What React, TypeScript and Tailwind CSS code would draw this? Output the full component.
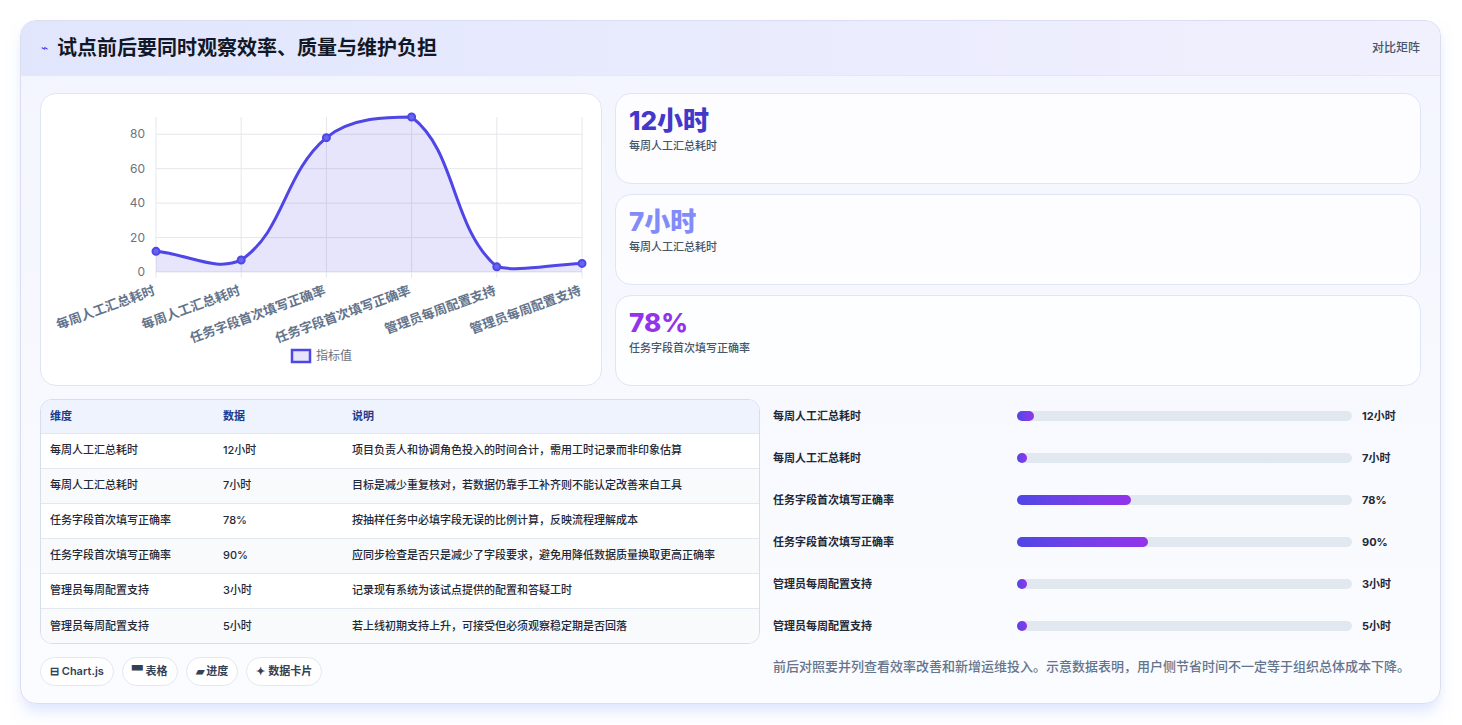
import React from 'react'

const font = { fontFamily: 'Inter, "Noto Sans CJK SC", sans-serif' }

const labels = ['每周人工汇总耗时', '每周人工汇总耗时', '任务字段首次填写正确率', '任务字段首次填写正确率', '管理员每周配置支持', '管理员每周配置支持']
const values = [12, 7, 78, 90, 3, 5]

const rows = [
  ['每周人工汇总耗时', '12小时', '项目负责人和协调角色投入的时间合计，需用工时记录而非印象估算'],
  ['每周人工汇总耗时', '7小时', '目标是减少重复核对，若数据仍靠手工补齐则不能认定改善来自工具'],
  ['任务字段首次填写正确率', '78%', '按抽样任务中必填字段无误的比例计算，反映流程理解成本'],
  ['任务字段首次填写正确率', '90%', '应同步检查是否只是减少了字段要求，避免用降低数据质量换取更高正确率'],
  ['管理员每周配置支持', '3小时', '记录现有系统为该试点提供的配置和答疑工时'],
  ['管理员每周配置支持', '5小时', '若上线初期支持上升，可接受但必须观察稳定期是否回落'],
]

const bars = [
  ['每周人工汇总耗时', 5, '12小时'],
  ['每周人工汇总耗时', 3, '7小时'],
  ['任务字段首次填写正确率', 34, '78%'],
  ['任务字段首次填写正确率', 39, '90%'],
  ['管理员每周配置支持', 3, '3小时'],
  ['管理员每周配置支持', 3, '5小时'],
] as const

function Chart() {
  const x0 = 115, x1 = 541, yz = 178, k = 155 / 90
  const top = yz - 90 * k
  const clampY = (y: number) => Math.max(top, Math.min(yz, y))
  const pts = values.map((v, i) => ({ x: x0 + (i * (x1 - x0)) / 5, y: yz - v * k }))
  // chart.js style spline, tension 0.4, control points capped to chart area
  const cps = pts.map((p, i) => {
    const prev = pts[i - 1] ?? p, next = pts[i + 1] ?? p
    const d01 = Math.hypot(p.x - prev.x, p.y - prev.y), d12 = Math.hypot(next.x - p.x, next.y - p.y)
    const s01 = d01 / (d01 + d12 || 1), s12 = d12 / (d01 + d12 || 1)
    const fa = 0.4 * s01, fb = 0.4 * s12
    return {
      px: p.x - fa * (next.x - prev.x), py: clampY(p.y - fa * (next.y - prev.y)),
      nx: p.x + fb * (next.x - prev.x), ny: clampY(p.y + fb * (next.y - prev.y)),
    }
  })
  let d = `M${pts[0].x},${pts[0].y}`
  for (let i = 1; i < pts.length; i++) {
    d += ` C${cps[i - 1].nx},${cps[i - 1].ny} ${cps[i].px},${cps[i].py} ${pts[i].x},${pts[i].y}`
  }
  const area = `${d} L${x1},${yz} L${x0},${yz} Z`
  return (
    <svg width="561" height="292" viewBox="0 0 561 292">
      {[0, 20, 40, 60, 80].map((t) => (
        <g key={t}>
          <line x1={x0} x2={x1} y1={yz - t * k} y2={yz - t * k} stroke="#e5e7eb" />
          <text x={x0 - 11} y={yz - t * k + 4} textAnchor="end" fontSize="12" fill="#6b7280" fontFamily="Inter, sans-serif">{t}</text>
        </g>
      ))}
      {pts.map((p, i) => (
        <line key={i} x1={p.x} x2={p.x} y1={23} y2={yz + 6} stroke="#e5e7eb" />
      ))}
      <path d={area} fill="rgba(79,70,229,0.14)" />
      <path d={d} fill="none" stroke="#4f46e5" strokeWidth="3" />
      {pts.map((p, i) => (
        <circle key={i} cx={p.x} cy={p.y} r="3.5" fill="#6366f1" stroke="#4f46e5" strokeWidth="2" />
      ))}
      {pts.map((p, i) => (
        <text key={i} x={p.x} y={yz + 22} textAnchor="end" fontSize="13" fontWeight="600" fill="#64748b" transform={`rotate(-20 ${p.x} ${yz + 22})`} fontFamily='"Noto Sans CJK SC", sans-serif'>{labels[i]}</text>
      ))}
      <rect x="251" y="256" width="18" height="12" fill="rgba(79,70,229,0.14)" stroke="#4f46e5" strokeWidth="2.5" />
      <text x="275" y="266" fontSize="12" fill="#6b7280" fontFamily='"Noto Sans CJK SC", sans-serif'>指标值</text>
    </svg>
  )
}

function Stat({ value, label, color }: { value: string; label: string; color: string }) {
  return (
    <div className="flex h-[91px] flex-col rounded-2xl border border-[#dfe5f5] bg-white/80 px-[13px] pt-[10px]">
      <div className={`text-[26px] font-extrabold leading-[34px] ${color}`}>{value}</div>
      <div className="text-[11px] font-medium text-[#475569]">{label}</div>
    </div>
  )
}

export default function App() {
  return (
    <div className="min-h-screen bg-white p-5 pr-[21px]" style={font}>
      <div className="overflow-hidden rounded-2xl border border-[#d9def0] bg-gradient-to-b from-[#f3f5fe] to-[#fbfcff] shadow-lg shadow-indigo-100">
        <div className="flex h-[55px] items-center justify-between border-b border-[#e3e7f6] bg-gradient-to-r from-[#e1e6fd] to-[#f1f0fd] px-5">
          <div className="flex items-center gap-[9px]">
            <span className="text-[12px] text-indigo-600">⌁</span>
            <span className="text-[20px] font-bold text-[#111827]">试点前后要同时观察效率、质量与维护负担</span>
          </div>
          <span className="text-[12px] font-medium text-[#475569]">对比矩阵</span>
        </div>
        <div className="px-[19px] pb-[17px] pt-[17px]">
          <div className="flex gap-[13px]">
            <div className="h-[293px] w-[562px] shrink-0 overflow-hidden rounded-2xl border border-[#dfe5f5] bg-white">
              <Chart />
            </div>
            <div className="flex flex-1 flex-col gap-[10px]">
              <Stat value="12小时" label="每周人工汇总耗时" color="text-[#4338ca]" />
              <Stat value="7小时" label="每周人工汇总耗时" color="text-[#818cf8]" />
              <Stat value="78%" label="任务字段首次填写正确率" color="text-[#9333ea]" />
            </div>
          </div>
          <div className="mt-[13px] flex gap-[12px]">
            <div className="w-[720px] shrink-0">
              <div className="overflow-hidden rounded-xl border border-[#d6deee] bg-white">
                <table className="w-full text-left text-[11px] font-medium text-[#1f2937]">
                  <thead>
                    <tr className="h-[33px] bg-[#eef3fe] text-[#1e3a8a]">
                      <th className="w-[182px] pl-[9px] font-semibold">维度</th>
                      <th className="w-[129px] font-semibold">数据</th>
                      <th className="font-semibold">说明</th>
                    </tr>
                  </thead>
                  <tbody>
                    {rows.map((r, i) => (
                      <tr key={i} className={`h-[35px] border-t border-[#e2e8f0] ${i % 2 ? 'bg-[#f8fafc]' : 'bg-white'}`}>
                        <td className="pl-[9px]">{r[0]}</td>
                        <td>{r[1]}</td>
                        <td>{r[2]}</td>
                      </tr>
                    ))}
                  </tbody>
                </table>
              </div>
              <div className="mt-[13px] flex gap-[8px] text-[11px] text-[#334155]">
                {['⊟ Chart.js', '▀ 表格', '▰ 进度', '✦ 数据卡片'].map((t) => (
                  <span key={t} className="flex h-[29px] items-center rounded-full border border-[#e2e8f0] bg-white px-[9px] font-semibold">{t}</span>
                ))}
              </div>
            </div>
            <div className="flex-1 pl-[1px]">
              <div className="-mt-[4px] flex flex-col">
                {bars.map(([l, p, v], i) => (
                  <div key={i} className="flex h-[42px] items-center text-[11px] font-semibold text-[#1f2937]">
                    <span className="w-[244px]">{l}</span>
                    <div className="h-[10px] w-[335px] rounded-full bg-[#e2e8f0]">
                      <div className="h-full min-w-[10px] rounded-full bg-gradient-to-r from-[#4f46e5] to-[#9333ea]" style={{ width: `${p}%` }} />
                    </div>
                    <span className="ml-[10px] font-bold">{v}</span>
                  </div>
                ))}
              </div>
              <p className="mt-[10px] text-[13px] font-medium text-[#64748b]">前后对照要并列查看效率改善和新增运维投入。示意数据表明，用户侧节省时间不一定等于组织总体成本下降。</p>
            </div>
          </div>
        </div>
      </div>
    </div>
  )
}
